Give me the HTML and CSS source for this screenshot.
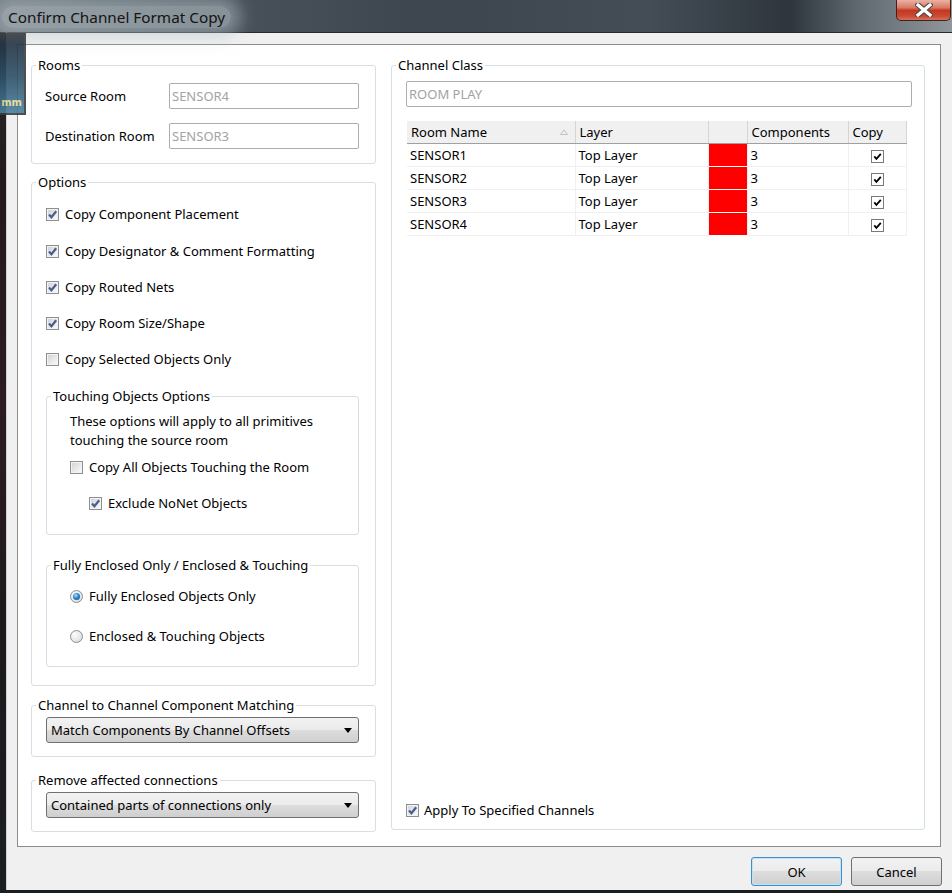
FILE: index.html
```html
<!DOCTYPE html>
<html lang="en">
<head>
    <meta charset="UTF-8">
    <title>Confirm Channel Format Copy</title>
    <link rel="stylesheet" href="styles.css">
</head>
<body>
<div class="screen">
    <div class="titlebar">
        <span class="title">Confirm Channel Format Copy</span>
        <span class="close">
            <svg width="18" height="14" viewBox="0 0 18 14">
                <path d="M3 2 L15 12 M15 2 L3 12" stroke="#4b4b4b" stroke-width="5.5" stroke-linecap="square"/>
                <path d="M3 2 L15 12 M15 2 L3 12" stroke="#fff" stroke-width="3.2" stroke-linecap="square"/>
            </svg>
        </span>
    </div>

    <div class="peek"><span>mm</span></div>

    <div class="client">
        <div class="panel">
            <!-- left column -->
            <div class="col-left">
                <fieldset class="group">
                    <legend>Rooms</legend>
                    <div class="gb rooms-body">
                        <div class="field">
                            <label>Source Room</label>
                            <div class="edit">SENSOR4</div>
                        </div>
                        <div class="field">
                            <label>Destination Room</label>
                            <div class="edit">SENSOR3</div>
                        </div>
                    </div>
                </fieldset>

                <fieldset class="group options">
                    <legend>Options</legend>
                    <div class="gb options-body">
                        <div class="check-row"><span class="cb"><svg class="tick" viewBox="0 0 11 11"><path d="M2 5.6 L4.4 8.2 L9.2 2.2"/></svg></span>Copy Component Placement</div>
                        <div class="check-row"><span class="cb"><svg class="tick" viewBox="0 0 11 11"><path d="M2 5.6 L4.4 8.2 L9.2 2.2"/></svg></span>Copy Designator &amp; Comment Formatting</div>
                        <div class="check-row"><span class="cb"><svg class="tick" viewBox="0 0 11 11"><path d="M2 5.6 L4.4 8.2 L9.2 2.2"/></svg></span>Copy Routed Nets</div>
                        <div class="check-row"><span class="cb"><svg class="tick" viewBox="0 0 11 11"><path d="M2 5.6 L4.4 8.2 L9.2 2.2"/></svg></span>Copy Room Size/Shape</div>
                        <div class="check-row"><span class="cb"></span>Copy Selected Objects Only</div>

                        <fieldset class="group sub touching">
                            <legend>Touching Objects Options</legend>
                            <div class="gb touching-body">
                                <p class="note">These options will apply to all primitives<br>touching the source room</p>
                                <div class="check-row"><span class="cb"></span>Copy All Objects Touching the Room</div>
                                <div class="check-row indent"><span class="cb"><svg class="tick" viewBox="0 0 11 11"><path d="M2 5.6 L4.4 8.2 L9.2 2.2"/></svg></span>Exclude NoNet Objects</div>
                            </div>
                        </fieldset>

                        <fieldset class="group sub enclosed">
                            <legend>Fully Enclosed Only / Enclosed &amp; Touching</legend>
                            <div class="gb enclosed-body">
                                <div class="check-row"><span class="radio on"></span>Fully Enclosed Objects Only</div>
                                <div class="check-row"><span class="radio"></span>Enclosed &amp; Touching Objects</div>
                            </div>
                        </fieldset>
                    </div>
                </fieldset>

                <fieldset class="group matching">
                    <legend>Channel to Channel Component Matching</legend>
                    <div class="gb combo-body">
                        <div class="combo"><span>Match Components By Channel Offsets</span><i class="arrow"></i></div>
                    </div>
                </fieldset>

                <fieldset class="group removing">
                    <legend>Remove affected connections</legend>
                    <div class="gb combo-body last">
                        <div class="combo"><span>Contained parts of connections only</span><i class="arrow"></i></div>
                    </div>
                </fieldset>
            </div>

            <!-- right column -->
            <fieldset class="group channel">
                <legend>Channel Class</legend>
                <div class="gb channel-body">
                    <div class="edit wide">ROOM PLAY</div>

                    <table class="rooms-table">
                        <colgroup>
                            <col style="width:168px">
                            <col style="width:133px">
                            <col style="width:39px">
                            <col style="width:101px">
                            <col style="width:58px">
                        </colgroup>
                        <thead>
                            <tr>
                                <th class="sorted">Room Name
                                    <svg class="sort" width="8" height="6" viewBox="0 0 8 6"><path d="M0.5 5.5 L4 0.8 L7.5 5.5 Z" fill="none" stroke="#c4c4c4"/></svg>
                                </th>
                                <th>Layer</th>
                                <th></th>
                                <th>Components</th>
                                <th>Copy</th>
                            </tr>
                        </thead>
                        <tbody>
                            <tr><td>SENSOR1</td><td>Top Layer</td><td class="swatch"></td><td>3</td><td class="copy"><span class="mini"><svg viewBox="0 0 11 11"><path d="M2.3 5.4 L4.4 7.8 L8.8 2.8"/></svg></span></td></tr>
                            <tr><td>SENSOR2</td><td>Top Layer</td><td class="swatch"></td><td>3</td><td class="copy"><span class="mini"><svg viewBox="0 0 11 11"><path d="M2.3 5.4 L4.4 7.8 L8.8 2.8"/></svg></span></td></tr>
                            <tr><td>SENSOR3</td><td>Top Layer</td><td class="swatch"></td><td>3</td><td class="copy"><span class="mini"><svg viewBox="0 0 11 11"><path d="M2.3 5.4 L4.4 7.8 L8.8 2.8"/></svg></span></td></tr>
                            <tr><td>SENSOR4</td><td>Top Layer</td><td class="swatch"></td><td>3</td><td class="copy"><span class="mini"><svg viewBox="0 0 11 11"><path d="M2.3 5.4 L4.4 7.8 L8.8 2.8"/></svg></span></td></tr>
                        </tbody>
                    </table>

                    <div class="check-row apply"><span class="cb"><svg class="tick" viewBox="0 0 11 11"><path d="M2 5.6 L4.4 8.2 L9.2 2.2"/></svg></span>Apply To Specified Channels</div>
                </div>
            </fieldset>
        </div>

        <div class="footer">
            <div class="btn default">OK</div>
            <div class="btn">Cancel</div>
        </div>
    </div>
</div>
</body>
</html>
```

FILE: styles.css
```css
html, body {
    margin: 0;
}
body {
    width: 952px;
    height: 893px;
    overflow: hidden;
    background: linear-gradient(#2a2c30 0%, #231a1e 20%, #2b1d22 45%, #1f1a1d 70%, #1a1f24 100%);
    font-family: "Noto Sans", "Open Sans", sans-serif;
    font-size: 13px;
    color: #000;
}
.screen {
    position: relative;
    height: 893px;
}

/* title bar */
.titlebar {
    height: 32px;
    display: flex;
    justify-content: space-between;
    align-items: flex-start;
    background: linear-gradient(90deg, #6c757c 0%, #4a535c 22%, #3d464f 45%, #444d56 68%, #2e353d 83%, #5f686f 90%, #8f979c 100%);
}
.title {
    margin: 6px 0 0 2px;
    padding: 1px 6px;
    font-size: 15.3px;
    line-height: 20px;
    color: #141414;
    background: rgba(186, 197, 203, 0.55);
    border-radius: 14px;
    box-shadow: 0 0 16px 10px rgba(186, 197, 203, 0.5);
}
.close {
    width: 55px;
    height: 21px;
    margin-right: 1px;
    box-sizing: border-box;
    border: 1px solid #40211b;
    border-top: none;
    border-radius: 0 0 5px 5px;
    background: linear-gradient(#eab2a4 0%, #d87a66 38%, #c5381f 52%, #c94a33 80%, #d9705a 100%);
    display: flex;
    align-items: center;
    justify-content: center;
}

/* piece of another window lying over the corner */
.peek {
    position: absolute;
    left: 0;
    top: 33px;
    width: 24px;
    height: 80px;
    border-right: 2px solid #3b3d40;
    border-bottom: 2px solid #3b3d40;
    background: linear-gradient(#3a3e42 0%, #243545 14%, #2d5068 55%, #4c7f9c 100%);
    opacity: 0.9;
    display: flex;
    align-items: flex-end;
    justify-content: flex-end;
    z-index: 2;
}
.peek span {
    margin: 0 2px 5px 0;
    font-family: "DejaVu Sans", sans-serif;
    font-weight: bold;
    font-size: 10px;
    line-height: 11px;
    color: #e4dc9c;
}

/* window client area */
.client {
    margin-left: 6px;
    height: 858px;
    box-sizing: border-box;
    background: #f0f0f0;
    border-top: 1px solid #262b31;
    border-left: 1px solid #d2d2d2;
    padding: 11px 0 0 10px;
}
.panel {
    width: 924px;
    box-sizing: border-box;
    border: 1px solid #8c8c8c;
    background: #fff;
    display: flex;
    gap: 15px;
    padding: 13px 15px 14px 13px;
}
.col-left {
    width: 345px;
    display: flex;
    flex-direction: column;
}

/* group boxes */
fieldset.group {
    margin: 0;
    padding: 0;
    min-width: 0;
    border: 1px solid #d5dfe5;
    border-radius: 3px;
}
fieldset.group legend {
    margin-left: 4px;
    padding: 0 2px;
    height: 15px;
    line-height: 15px;
}
fieldset.options { margin-top: 11px; }
fieldset.matching { margin-top: 12px; }
fieldset.removing { margin-top: 16px; }

.rooms-body {
    padding: 10px 16px 14px 13px;
}
.field {
    display: flex;
    align-items: center;
}
.field + .field {
    margin-top: 14px;
}
.field label {
    width: 124px;
}
.field .edit {
    width: 190px;
}
.edit {
    height: 26px;
    box-sizing: border-box;
    border: 1px solid #abadb3;
    border-radius: 2px;
    background: #fff;
    color: #a3a3a3;
    padding-left: 2px;
    line-height: 24px;
}

.options-body {
    padding: 14px 16px 18px 14px;
}
.check-row {
    height: 20px;
    display: flex;
    align-items: center;
    gap: 6px;
}
.options-body > .check-row + .check-row {
    margin-top: 16px;
}
.options-body > .check-row:nth-child(2) {
    margin-top: 17px;
}

/* checkboxes and radios, Windows 7 look */
.cb {
    width: 13px;
    height: 13px;
    flex: none;
    box-sizing: border-box;
    border: 1px solid #8e8f8f;
    background: linear-gradient(135deg, #cdd0d4 0%, #e6e7e9 50%, #fbfbfb 100%);
    box-shadow: inset 0 0 0 1px #f3f3f3;
    display: flex;
    align-items: center;
    justify-content: center;
}
.tick {
    width: 11px;
    height: 11px;
}
.tick path {
    fill: none;
    stroke: #4a5e8e;
    stroke-width: 2.2;
}
.radio {
    width: 13px;
    height: 13px;
    flex: none;
    box-sizing: border-box;
    border-radius: 50%;
    border: 1px solid #8e8f8f;
    background: radial-gradient(circle at 35% 35%, #fdfdfd 0%, #e4e5e7 60%, #cfd1d4 100%);
    position: relative;
}
.radio.on::after {
    content: "";
    position: absolute;
    left: 2px;
    top: 2px;
    width: 7px;
    height: 7px;
    border-radius: 50%;
    background: radial-gradient(circle at 40% 35%, #b4e6ff 0%, #2f8fd8 40%, #0d3d70 100%);
}

fieldset.touching {
    margin-top: 20px;
}
.touching-body {
    padding: 8px 10px 21px 23px;
}
.note {
    margin: 0 0 7px;
    line-height: 19px;
}
.touching-body .check-row + .check-row {
    margin-top: 16px;
}
.check-row.indent {
    margin-left: 19px;
}
fieldset.enclosed {
    margin-top: 23px;
}
.enclosed-body {
    padding: 13px 10px 20px 23px;
}
.enclosed-body .check-row + .check-row {
    margin-top: 20px;
}

/* combo boxes */
.combo-body {
    padding: 4px 16px 13px 14px;
}
.combo-body.last {
    padding-bottom: 13px;
}
.combo {
    height: 26px;
    box-sizing: border-box;
    border: 1px solid #707070;
    border-radius: 3px;
    background: linear-gradient(#f2f2f2 0%, #ebebeb 49%, #dddddd 50%, #cfcfcf 100%);
    display: flex;
    align-items: center;
    justify-content: space-between;
    padding: 0 6px 0 4px;
}
.arrow {
    width: 0;
    height: 0;
    border-left: 4px solid transparent;
    border-right: 4px solid transparent;
    border-top: 5px solid #000;
}

/* channel class */
fieldset.channel {
    flex: 1;
    margin-bottom: 2px;
    display: flex;
    flex-direction: column;
}
.channel-body {
    flex: 1;
    display: flex;
    flex-direction: column;
    padding: 8px 12px 9px 14px;
}
.rooms-table {
    margin: 14px 0 0 1px;
    width: 499px;
    table-layout: fixed;
    border-collapse: collapse;
}
.rooms-table th {
    height: 22px;
    padding: 0 0 0 4px;
    background: #f0f0f0;
    border-right: 1px solid #d5d5d5;
    border-bottom: 1px solid #a0a0a0;
    font-weight: normal;
    text-align: left;
    white-space: nowrap;
}
.rooms-table th.sorted {
    position: relative;
}
.sort {
    position: absolute;
    right: 7px;
    top: 8px;
}
.rooms-table td {
    height: 22px;
    padding: 0 0 0 3px;
    border-right: 1px solid #f0f0f0;
    border-bottom: 1px solid #f0f0f0;
}
.rooms-table td.swatch {
    background: #ff0000;
    border-bottom-color: #fff;
}
.rooms-table td.copy {
    padding: 0;
    text-align: center;
}
.mini {
    display: inline-flex;
    width: 13px;
    height: 13px;
    box-sizing: border-box;
    border: 1px solid #7a7a7a;
    background: #fff;
    vertical-align: middle;
    align-items: center;
    justify-content: center;
}
.mini svg {
    width: 11px;
    height: 11px;
}
.mini path {
    fill: none;
    stroke: #000;
    stroke-width: 1.8;
}
.check-row.apply {
    margin-top: auto;
    gap: 5px;
}

/* dialog buttons */
.footer {
    display: flex;
    justify-content: flex-end;
    gap: 9px;
    padding: 10px 10px 0 0;
}
.btn {
    width: 91px;
    height: 29px;
    box-sizing: border-box;
    border: 1px solid #707070;
    border-radius: 3px;
    background: linear-gradient(#f2f2f2 0%, #ebebeb 49%, #dddddd 50%, #cfcfcf 100%);
    display: flex;
    align-items: center;
    justify-content: center;
}
.btn.default {
    border-color: #3c8fcb;
    box-shadow: inset 0 0 0 1px #bfe3f7;
}
```
